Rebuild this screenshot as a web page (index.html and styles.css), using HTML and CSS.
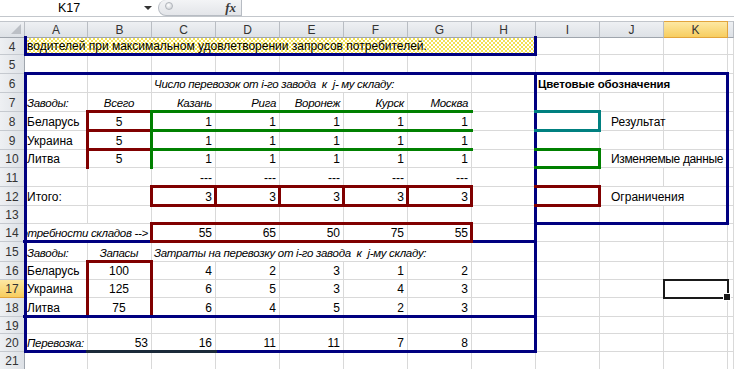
FILE: index.html
```html
<!DOCTYPE html>
<html lang="ru">
<head>
<meta charset="utf-8">
<title>Excel</title>
<link rel="stylesheet" href="styles.css">
</head>
<body>
<div class="fbar">
  <div class="namebox"><span class="nb-text">K17</span><span class="nb-arrow"></span></div>
  <div class="pill"><span class="knob"></span><span class="fx">fx</span></div>
  <div class="finput"></div>
</div>
<div class="gap"></div>
<div class="sheet">
  <div class="cells tracks">
    <div class="hc corner"><span class="tri"></span></div>
    <div class="hc">A</div><div class="hc">B</div><div class="hc">C</div><div class="hc">D</div><div class="hc">E</div><div class="hc">F</div><div class="hc">G</div><div class="hc">H</div><div class="hc">I</div><div class="hc">J</div><div class="hc sel">K</div><div class="hc"></div>

    <div class="rh">4</div>
    <div class="c dots s8">водителей при максимальном удовлетворении запросов потребителей.</div>
    <div class="c"></div><div class="c"></div><div class="c"></div><div class="c"></div>

    <div class="rh">5</div>
    <div class="c"></div><div class="c"></div><div class="c"></div><div class="c"></div><div class="c"></div><div class="c"></div><div class="c"></div><div class="c"></div><div class="c"></div><div class="c"></div><div class="c"></div><div class="c"></div>

    <div class="rh">6</div>
    <div class="c"></div><div class="c"></div>
    <div class="c s5 i">Число перевозок от i-го завода&nbsp; к&nbsp; j- му складу:</div>
    <div class="c"></div>
    <div class="c s3 b">Цветовые обозначения</div>
    <div class="c"></div>

    <div class="rh">7</div>
    <div class="c i">Заводы:</div><div class="c i ctr">Всего</div>
    <div class="c i r">Казань</div><div class="c i r">Рига</div><div class="c i r">Воронеж</div><div class="c i r">Курск</div><div class="c i r">Москва</div>
    <div class="c"></div><div class="c"></div><div class="c"></div><div class="c"></div><div class="c"></div>

    <div class="rh">8</div>
    <div class="c">Беларусь</div><div class="c ctr">5</div>
    <div class="c r">1</div><div class="c r">1</div><div class="c r">1</div><div class="c r">1</div><div class="c r">1</div>
    <div class="c"></div><div class="c"></div><div class="c ind">Результат</div><div class="c"></div><div class="c"></div>

    <div class="rh">9</div>
    <div class="c">Украина</div><div class="c ctr">5</div>
    <div class="c r">1</div><div class="c r">1</div><div class="c r">1</div><div class="c r">1</div><div class="c r">1</div>
    <div class="c"></div><div class="c"></div><div class="c"></div><div class="c"></div><div class="c"></div>

    <div class="rh">10</div>
    <div class="c">Литва</div><div class="c ctr">5</div>
    <div class="c r">1</div><div class="c r">1</div><div class="c r">1</div><div class="c r">1</div><div class="c r">1</div>
    <div class="c"></div><div class="c"></div><div class="c s2 ind tight">Изменяемые данные</div><div class="c"></div>

    <div class="rh">11</div>
    <div class="c"></div><div class="c"></div>
    <div class="c r">---</div><div class="c r">---</div><div class="c r">---</div><div class="c r">---</div><div class="c r">---</div>
    <div class="c"></div><div class="c"></div><div class="c"></div><div class="c"></div><div class="c"></div>

    <div class="rh">12</div>
    <div class="c">Итого:</div><div class="c"></div>
    <div class="c r">3</div><div class="c r">3</div><div class="c r">3</div><div class="c r">3</div><div class="c r">3</div>
    <div class="c"></div><div class="c"></div><div class="c s2 ind">Ограничения</div><div class="c"></div>

    <div class="rh">13</div>
    <div class="c"></div><div class="c"></div><div class="c"></div><div class="c"></div><div class="c"></div><div class="c"></div><div class="c"></div><div class="c"></div><div class="c"></div><div class="c"></div><div class="c"></div><div class="c"></div>

    <div class="rh">14</div>
    <div class="c s2 i r clip">потребности складов --&gt;</div>
    <div class="c r">55</div><div class="c r">65</div><div class="c r">50</div><div class="c r">75</div><div class="c r">55</div>
    <div class="c"></div><div class="c"></div><div class="c"></div><div class="c"></div><div class="c"></div>

    <div class="rh">15</div>
    <div class="c i">Заводы:</div><div class="c i ctr">Запасы</div>
    <div class="c s5 i">Затраты на перевозку от i-го завода&nbsp; к&nbsp; j-му складу:</div>
    <div class="c"></div><div class="c"></div><div class="c"></div><div class="c"></div><div class="c"></div>

    <div class="rh">16</div>
    <div class="c">Беларусь</div><div class="c ctr">100</div>
    <div class="c r">4</div><div class="c r">2</div><div class="c r">3</div><div class="c r">1</div><div class="c r">2</div>
    <div class="c"></div><div class="c"></div><div class="c"></div><div class="c"></div><div class="c"></div>

    <div class="rh sel">17</div>
    <div class="c">Украина</div><div class="c ctr">125</div>
    <div class="c r">6</div><div class="c r">5</div><div class="c r">3</div><div class="c r">4</div><div class="c r">3</div>
    <div class="c"></div><div class="c"></div><div class="c"></div><div class="c"></div><div class="c"></div>

    <div class="rh">18</div>
    <div class="c">Литва</div><div class="c ctr">75</div>
    <div class="c r">6</div><div class="c r">4</div><div class="c r">5</div><div class="c r">2</div><div class="c r">3</div>
    <div class="c"></div><div class="c"></div><div class="c"></div><div class="c"></div><div class="c"></div>

    <div class="rh">19</div>
    <div class="c"></div><div class="c"></div><div class="c"></div><div class="c"></div><div class="c"></div><div class="c"></div><div class="c"></div><div class="c"></div><div class="c"></div><div class="c"></div><div class="c"></div><div class="c"></div>

    <div class="rh">20</div>
    <div class="c i">Перевозка:</div><div class="c r">53</div>
    <div class="c r">16</div><div class="c r">11</div><div class="c r">11</div><div class="c r">7</div><div class="c r">8</div>
    <div class="c"></div><div class="c"></div><div class="c"></div><div class="c"></div><div class="c"></div>

    <div class="rh">21</div>
    <div class="c"></div><div class="c"></div><div class="c"></div><div class="c"></div><div class="c"></div><div class="c"></div><div class="c"></div><div class="c"></div><div class="c"></div><div class="c"></div><div class="c"></div><div class="c"></div>
  </div>

  <div class="ov tracks">
    <div class="bx la l r bo navy row4"></div>
    <div class="bx la t l r bo navy main"></div>
    <div class="bx bo navy r14line"></div>
    <div class="bx t r bo navy legend"></div>

    <div class="bx t l r bo red b8"></div>
    <div class="bx t l r bo red b9"></div>
    <div class="bx t l r red b10"></div>

    <div class="bx t l green g8"></div>
    <div class="bx t green g9"></div>
    <div class="bx t green g10"></div>

    <div class="bx t l r bo red c12 x1"></div>
    <div class="bx t l r bo red c12 x2"></div>
    <div class="bx t l r bo red c12 x3"></div>
    <div class="bx t l r bo red c12 x4"></div>
    <div class="bx t l r bo red c12 x5"></div>

    <div class="bx t l r bo red c14"></div>
    <div class="bx t l r bo red b16"></div>
    <div class="bx bo navy r18line"></div>
    <div class="bx bo dark r20seg"></div>

    <div class="bx t r bo teal lg1"></div>
    <div class="bx t r bo green lg2"></div>
    <div class="bx t r bo red lg3"></div>

    <div class="selbox"></div>
  </div>
</div>
</body>
</html>
```
FILE: styles.css
```css
* { box-sizing: border-box; margin: 0; padding: 0; }
body {
  margin: 0;
  width: 734px;
  height: 369px;
  overflow: hidden;
  background: #fff;
  font-family: "Liberation Sans", Arial, sans-serif;
  color: #000;
}

/* formula bar */
.fbar {
  height: 17px;
  display: flex;
  border-bottom: 1px solid #c3c7cc;
}
.namebox {
  width: 158px;
  display: flex;
  align-items: center;
  padding-left: 58px;
  padding-right: 6px;
  font-size: 12.5px;
  color: #000;
}
.nb-text { flex: 1; }
.nb-arrow {
  width: 0; height: 0;
  border-left: 4px solid transparent;
  border-right: 4px solid transparent;
  border-top: 4px solid #333;
}
.pill {
  width: 84px;
  display: flex;
  align-items: center;
  justify-content: space-between;
  padding: 0 5px 0 6px;
  background: linear-gradient(#f3f4f6, #e3e5e9);
  border: 1px solid #b7bcc3;
  border-top: none;
  border-radius: 0 0 0 9px;
  border-top-left-radius: 9px;
}
.knob {
  width: 8px; height: 8px;
  border-radius: 50%;
  background: radial-gradient(circle at 40% 35%, #fff, #c4c8ce);
  border: 1px solid #b0b4ba;
  margin-top: -4px;
}
.fx {
  font-family: "Liberation Serif", serif;
  font-style: italic;
  font-weight: bold;
  font-size: 13px;
  color: #3a3a3a;
}
.finput { flex: 1; }
.gap { height: 4px; }

/* sheet */
.sheet { display: grid; }
.cells, .ov { grid-area: 1 / 1; }
.tracks {
  display: grid;
  grid-template-columns: 25px 63px repeat(10, 64px) 1fr;
  grid-template-rows: 17px 17px 19px 19px 19px 19px 19px 18px 19px 19px 18px 18px 20px 18px 18px 19px 17px 18px 18px;
}
.ov { pointer-events: none; }

.hc {
  background: linear-gradient(#eef0f3, #dde1e6);
  border-top: 1px solid #c1c5cb;
  border-right: 1px solid #b9bdc3;
  border-bottom: 1px solid #9fa5ad;
  display: flex;
  align-items: center;
  justify-content: center;
  font-size: 12px;
  color: #333;
}
.hc.sel, .rh.sel {
  background: linear-gradient(#fde8a3, #f7cd5f);
  border-color: #e2a43c;
}
.corner {
  align-items: flex-end;
  justify-content: flex-end;
  padding: 0 3px 3px 0;
}
.tri {
  width: 0; height: 0;
  border-left: 10px solid transparent;
  border-bottom: 10px solid #bcc0c6;
}
.rh {
  background: linear-gradient(to right, #eef0f3, #dde1e6);
  border-right: 1px solid #9fa5ad;
  border-bottom: 1px solid #c5c9cf;
  display: flex;
  align-items: center;
  justify-content: center;
  font-size: 12px;
  color: #333;
  padding-top: 1px;
}

.c {
  border-right: 1px solid #d9d9d9;
  border-bottom: 1px solid #d9d9d9;
  display: flex;
  align-items: flex-end;
  padding: 0 3px 1px 2px;
  font-size: 12px;
  line-height: 14px;
  white-space: nowrap;
  min-width: 0;
}
.s2 { grid-column: span 2; }
.s3 { grid-column: span 3; }
.s5 { grid-column: span 5; }
.s8 { grid-column: span 8; }
.i { font-style: italic; font-size: 11.5px; letter-spacing: -0.3px; }
.b { font-weight: bold; font-size: 11.5px; letter-spacing: -0.1px; }
.tight { letter-spacing: -0.35px; }
.r { justify-content: flex-end; }
.ctr { justify-content: center; }
.clip { overflow: hidden; padding-left: 0; }
.ind { padding-left: 11px; }
.dots {
  background-color: #fff;
  background-image:
    radial-gradient(circle at 1px 1px, #f2e050 0.7px, transparent 1px),
    radial-gradient(circle at 3px 3px, #f2e050 0.7px, transparent 1px);
  background-size: 4px 4px;
}

/* border overlays */
.bx {
  margin: -2px -1px -1px -2px;
  border: 0 solid transparent;
}
.bx.la { margin-left: -1px; }
.bx.t { border-top-width: 3px; }
.bx.l { border-left-width: 3px; }
.bx.r { border-right-width: 3px; }
.bx.bo { border-bottom-width: 3px; }
.navy { border-color: #000080; }
.red { border-color: #800000; }
.green { border-color: #008000; }
.teal { border-color: #008080; }
.dark { border-color: #1b2a3a; }

.row4 { grid-row: 2; grid-column: 2 / 10; }
.main { grid-row: 4 / 19; grid-column: 2 / 10; }
.r14line { grid-row: 12; grid-column: 2 / 10; }
.legend { grid-row: 4 / 12; grid-column: 10 / 13; }
.b8 { grid-row: 6; grid-column: 3; }
.b9 { grid-row: 7; grid-column: 3; }
.b10 { grid-row: 8; grid-column: 3; }
.g8 { grid-row: 6 / 9; grid-column: 4 / 9; }
.g9 { grid-row: 7; grid-column: 4 / 9; }
.g10 { grid-row: 8; grid-column: 4 / 9; }
.c12 { grid-row: 10; }
.x1 { grid-column: 4; }
.x2 { grid-column: 5; }
.x3 { grid-column: 6; }
.x4 { grid-column: 7; }
.x5 { grid-column: 8; }
.c14 { grid-row: 12; grid-column: 4 / 9; }
.b16 { grid-row: 14 / 17; grid-column: 3; }
.r18line { grid-row: 16; grid-column: 2 / 10; }
.r20seg { grid-row: 18; grid-column: 3 / 5; }
.lg1 { grid-row: 6; grid-column: 10; }
.lg2 { grid-row: 8; grid-column: 10; }
.lg3 { grid-row: 10; grid-column: 10; }

.selbox {
  grid-row: 15;
  grid-column: 12;
  margin: -1px -1px -1px -1px;
  border: 2px solid #1a1a1a;
  position: relative;
}
.selbox::after {
  content: "";
  position: absolute;
  right: -4px;
  bottom: -4px;
  width: 6px;
  height: 6px;
  background: #1a1a1a;
  border: 1px solid #fff;
}
```
